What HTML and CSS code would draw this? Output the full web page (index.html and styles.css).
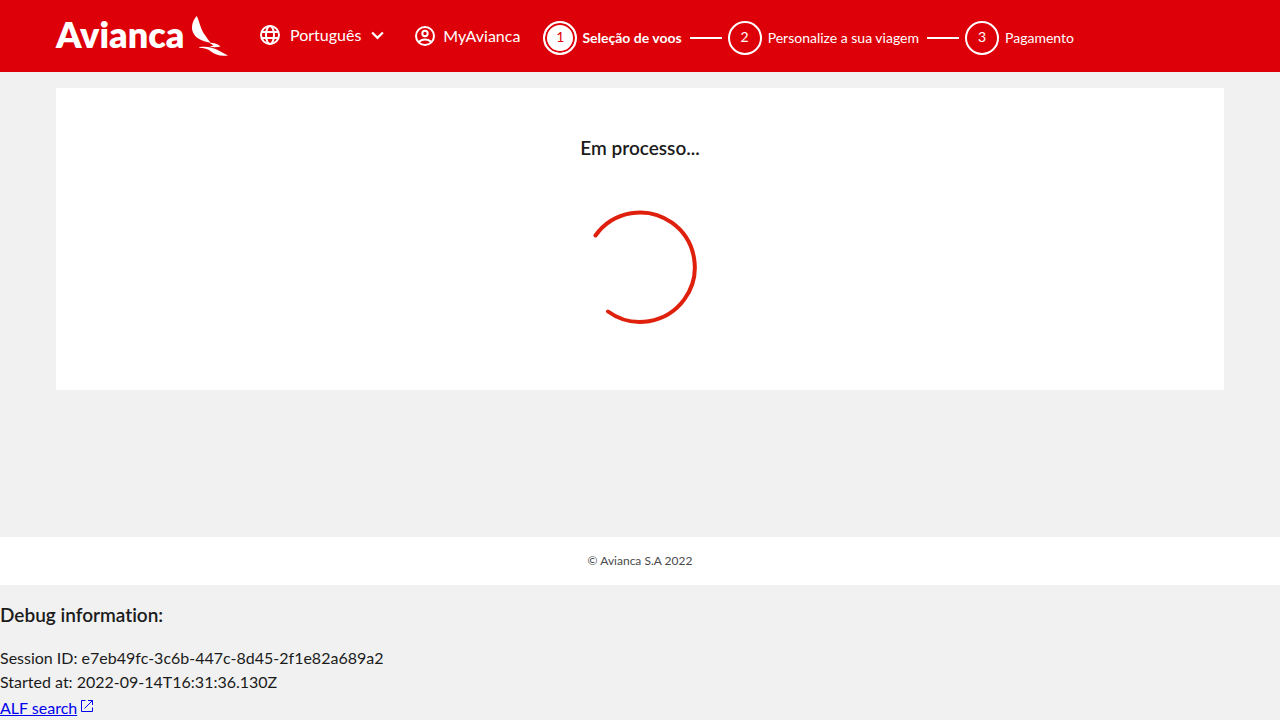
FILE: index.html
```html
<!DOCTYPE html>
<html lang="pt">
<head>
<meta charset="utf-8">
<meta name="viewport" content="width=device-width, initial-scale=1">
<title>Avianca</title>
<link rel="stylesheet" href="styles.css">
</head>
<body>
<header class="header">
  <a class="logo" href="#" aria-label="Avianca">
    <span class="logo-name">Avianca</span>
    <svg class="logo-bird" viewBox="192 15 36 42" aria-hidden="true">
      <path d="M196.700 16C193 20 191 26 192.500 31C194.500 37.500 200 40.500 210.500 42.800C206.500 37 203.500 34 201.500 29C199.500 24 198.500 19 196.700 16Z"/>
      <path d="M209 42.500C214 43 218.500 44 220.500 46.500C217 47.300 214 47.500 209.500 46.800L213.500 45.500Z"/>
      <path d="M199 47.200C203 46.800 207 46.500 211.500 47.800C217 49 222 53 228 55.500C220 56.500 215 54.500 211 51.500C208 48.800 204 48 199 47.800Z"/>
    </svg>
  </a>
  <button class="language" type="button">
    <svg class="icon" viewBox="0 0 20 20" aria-hidden="true"><g class="stroke"><circle cx="10" cy="10" r="9"/><ellipse cx="10" cy="10" rx="4" ry="9"/><path d="M1.500 7h17M1.500 13h17"/></g></svg>
    <span>Português</span>
    <svg class="chevron" viewBox="0 0 12 8" aria-hidden="true"><path d="M1 1.200L6 6.200L11 1.200"/></svg>
  </button>
  <a class="account" href="#">
    <svg class="icon" viewBox="0 0 20 20" aria-hidden="true"><g class="stroke"><circle cx="10" cy="10" r="9"/><circle cx="10" cy="7.500" r="2.700"/><path d="M3.800 16.200C5.500 14.200 7.600 13.500 10 13.500S14.500 14.200 16.200 16.200"/></g></svg>
    <span>MyAvianca</span>
  </a>
  <ol class="steps">
    <li class="step current" aria-current="step"><span class="number">1</span><span>Seleção de voos</span></li>
    <li class="step"><span class="number">2</span><span>Personalize a sua viagem</span></li>
    <li class="step"><span class="number">3</span><span>Pagamento</span></li>
  </ol>
</header>
<main class="main">
  <section class="panel">
    <h1 class="title">Em processo...</h1>
    <svg class="spinner" viewBox="0 0 116 116" role="img" aria-label="Em processo"><path d="M13.500 26.500A54.700 54.700 0 1 1 26 102.500"/></svg>
  </section>
</main>
<footer class="footer">© Avianca S.A 2022</footer>
<section class="debug">
  <h2 class="title">Debug information:</h2>
  <div>Session ID: e7eb49fc-3c6b-447c-8d45-2f1e82a689a2</div>
  <div>Started at: 2022-09-14T16:31:36.130Z</div>
  <div class="debug-link"><a href="#">ALF search</a><svg class="external" viewBox="0 0 14 14" aria-hidden="true"><path d="M5.500 1.500H1.500V12.500H12.500V8.500M8 1.500H12.500V6M12.500 1.500L4.500 9.500"/></svg></div>
</section>
</body>
</html>
```
FILE: styles.css
```css
* { box-sizing: border-box; }
body {
  margin: 0;
  background: #f1f1f1;
  color: #1b1b1b;
  font: 16px/24px Lato, sans-serif;
  font-variant-ligatures: none;
}
.header {
  display: flex;
  align-items: center;
  height: 72px;
  padding: 0 56px;
  background: #de0008;
  color: #fff;
}
.logo, .language, .account, .steps, .step { display: flex; align-items: center; }
.logo {
  justify-content: space-between;
  width: 172px;
  margin-right: 32px;
  color: #fff;
  text-decoration: none;
}
.logo-name {
  padding-bottom: 4px;
  font-size: 36px;
  font-weight: 800;
  line-height: 40px;
}
.logo-bird { width: 36px; height: 42px; flex: none; fill: #fff; }
.language {
  gap: 10px;
  margin: 0 31px 0 0;
  padding: 0 0 2px;
  border: 0;
  background: none;
  color: inherit;
  font: inherit;
}
.icon { width: 20px; height: 20px; }
.stroke { fill: none; stroke: #fff; stroke-width: 2; }
.chevron { width: 13px; height: 9px; fill: none; stroke: #fff; stroke-width: 2; }
.account {
  gap: 8px;
  margin-right: 23px;
  color: #fff;
  text-decoration: none;
}
.steps {
  margin: 0;
  padding: 4px 0 0;
  list-style: none;
  font-size: 14px;
  white-space: nowrap;
}
.step { gap: 6px; }
.current { gap: 5px; }
.step + .step::before {
  content: "";
  width: 32px;
  height: 2px;
  margin: 0 0 0 8px;
  background: #fff;
}
.number {
  width: 34px;
  height: 34px;
  border: 2px solid #fff;
  border-radius: 50%;
  line-height: 28px;
  text-align: center;
}
.current { font-weight: 700; }
.current .number {
  background: #fff;
  color: #de0008;
  font-weight: 400;
  box-shadow: inset 0 0 0 2px #de0008;
}
.main { min-height: 465px; padding: 16px 56px; }
.panel {
  display: flex;
  flex-direction: column;
  align-items: center;
  padding: 48px 16px 65px;
  background: #fff;
}
.title { margin: 0; font-size: 19px; font-weight: 600; line-height: 24px; }
.spinner {
  width: 116px;
  height: 116px;
  margin-top: 49px;
  fill: none;
  stroke: #df200d;
  stroke-width: 4;
  stroke-linecap: round;
}
.footer {
  padding: 12px;
  background: #fff;
  color: #4a4a4a;
  font-size: 12px;
  text-align: center;
}
.debug { padding-top: 18px; }
.debug .title { margin-bottom: 19px; }
.debug-link { display: flex; gap: 3px; padding-top: 2px; }
.debug-link a { color: #00e; }
.external { width: 14px; height: 14px; margin-top: 3px; fill: none; stroke: #00e; stroke-width: 1; }
```
